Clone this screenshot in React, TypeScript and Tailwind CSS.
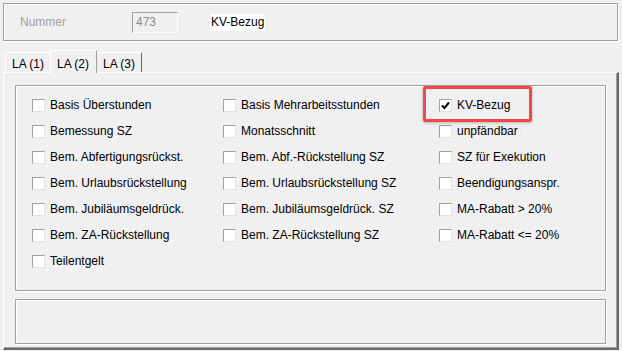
import React from 'react';

type Item = { label: string; checked?: boolean };

const col1: Item[] = [
  { label: 'Basis Überstunden' },
  { label: 'Bemessung SZ' },
  { label: 'Bem. Abfertigungsrückst.' },
  { label: 'Bem. Urlaubsrückstellung' },
  { label: 'Bem. Jubiläumsgeldrück.' },
  { label: 'Bem. ZA-Rückstellung' },
  { label: 'Teilentgelt' },
];

const col2: Item[] = [
  { label: 'Basis Mehrarbeitsstunden' },
  { label: 'Monatsschnitt' },
  { label: 'Bem. Abf.-Rückstellung SZ' },
  { label: 'Bem. Urlaubsrückstellung SZ' },
  { label: 'Bem. Jubiläumsgeldrück. SZ' },
  { label: 'Bem. ZA-Rückstellung SZ' },
];

const col3: Item[] = [
  { label: 'KV-Bezug', checked: true },
  { label: 'unpfändbar' },
  { label: 'SZ für Exekution' },
  { label: 'Beendigungsanspr.' },
  { label: 'MA-Rabatt > 20%' },
  { label: 'MA-Rabatt <= 20%' },
];

function Check({ item }: { item: Item }) {
  return (
    <div className="flex items-center h-[26px]">
      <div className="w-[13px] h-[13px] bg-white border-t border-l border-[#a0a0a0] border-r-[#e3e3e3] border-b-[#e3e3e3] border-r border-b flex items-center justify-center shrink-0">
        {item.checked && (
          <svg width="9" height="9" viewBox="0 0 9 9">
            <path d="M1 4.5 L3.5 7 L8 1.5" stroke="#000" strokeWidth="2" fill="none" />
          </svg>
        )}
      </div>
      <span className="ml-[5px] whitespace-nowrap">{item.label}</span>
    </div>
  );
}

function Column({ items }: { items: Item[] }) {
  return (
    <div className="flex flex-col">
      {items.map(it => (
        <Check key={it.label} item={it} />
      ))}
    </div>
  );
}

export default function App() {
  return (
    <div
      className="w-[622px] h-[351px] bg-[#f0f0f0] text-[12px] text-black overflow-hidden flex flex-col"
      style={{ fontFamily: '"Liberation Sans", Arial, sans-serif' }}
    >
      {/* Header */}
      <div className="mt-[3px] ml-[3px] w-[615px] h-[38px] border border-[#a0a0a0] shadow-[1px_1px_0_#fff,inset_1px_1px_0_#fff] flex items-center">
        <span className="ml-[16px] w-[112px] text-[#a0a0a0]">Nummer</span>
        <div className="w-[46px] h-[21px] border border-[#a0a0a0] border-r-white border-b-white flex items-center px-[3px] text-[#8c8c8c]">
          473
        </div>
        <span className="ml-[32px] bg-white px-[1px] leading-[17px]">KV-Bezug</span>
      </div>

      {/* Tabs */}
      <div className="mt-[8px] ml-[5px] flex items-end h-[23px]">
        <div className="h-[20px] px-[6px] border-t border-l border-white border-r border-r-[#a0a0a0] flex items-center pt-[3px]">
          LA (1)
        </div>
        <div className="h-[23px] w-[47px] px-[6px] border-t border-l border-white border-r border-r-[#a0a0a0] bg-[#f0f0f0] flex items-start pt-[4px] relative z-10 -mb-[1px] -ml-[1px]">
          LA (2)
        </div>
        <div className="h-[20px] px-[6px] border-t border-white border-r border-r-[#696969] flex items-center pt-[3px]">
          LA (3)
        </div>
      </div>

      {/* Panel */}
      <div className="ml-[3px] w-[616px] h-[278px] border-t border-l border-white border-r-2 border-b-2 border-r-[#696969] border-b-[#696969] shadow-[inset_-1px_-1px_0_#a0a0a0] flex flex-col px-[11px] pt-[12px]">
        <div className="relative h-[206px] border border-[#a0a0a0] shadow-[1px_1px_0_#fff,inset_1px_1px_0_#fff] pl-[16px] pt-[6px] grid grid-cols-[191px_216px_1fr]">
          <Column items={col1} />
          <Column items={col2} />
          <Column items={col3} />
          <div className="absolute left-[407px] top-[0px] w-[109px] h-[36px] border-[3px] border-[#f24848] rounded-[2px] shadow-[0_1px_3px_rgba(0,0,0,0.25)]" />
        </div>
        <div className="mt-[8px] h-[45px] border border-[#a0a0a0] shadow-[1px_1px_0_#fff,inset_1px_1px_0_#fff]" />
      </div>
    </div>
  );
}
